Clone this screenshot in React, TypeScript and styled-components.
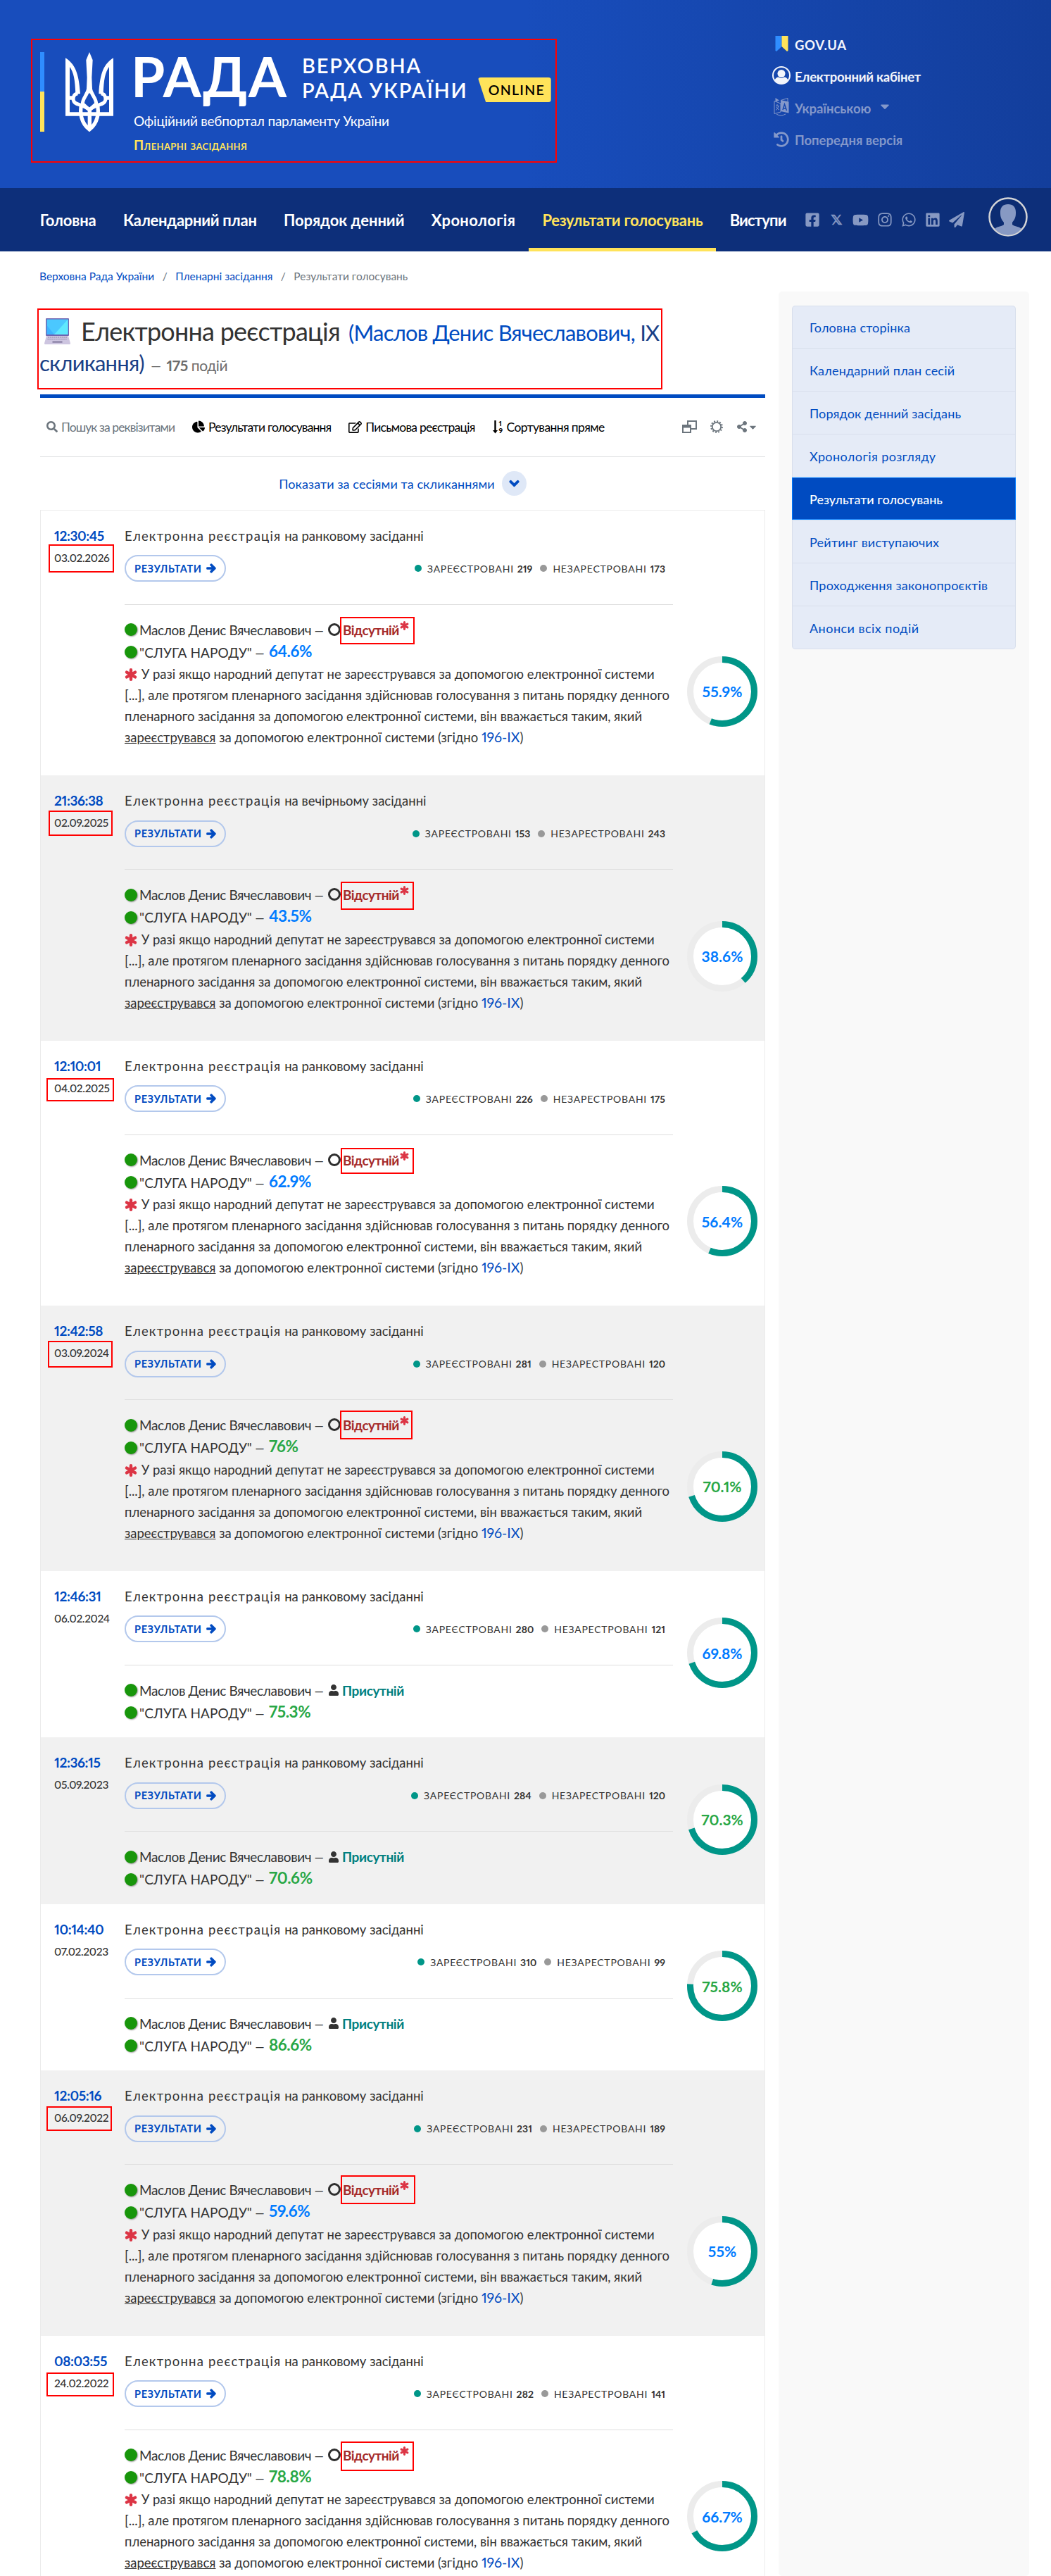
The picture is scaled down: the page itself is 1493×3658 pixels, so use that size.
import styled, { createGlobalStyle } from 'styled-components';
import {
	FaArrowRight,
	FaCaretDown,
	FaChartPie,
	FaChevronDown,
	FaFacebookSquare,
	FaHistory,
	FaInstagram,
	FaLinkedin,
	FaPaperPlane,
	FaRegEdit,
	FaSearch,
	FaShareAlt,
	FaUser,
	FaWhatsapp,
	FaYoutube,
} from 'react-icons/fa';

type Box = [left: number, top: number, width: number, height: number];

type Session = {
	time: string;
	date: string;
	place: string;
	registered: number;
	unregistered: number;
	faction: number;
	total: number;
	dateBox?: Box;
	absentBox?: Box;
};

const NAV = [
	{ label: 'Головна', ls: -0.18 },
	{ label: 'Календарний план', ls: -0.28 },
	{ label: 'Порядок денний', ls: -0.05 },
	{ label: 'Хронологія', ls: 0.3 },
	{ label: 'Результати голосувань', ls: -0.28, active: true },
	{ label: 'Виступи', ls: -0.83 },
];

const MENU = [
	{ label: 'Головна сторінка', ls: 0.19 },
	{ label: 'Календарний план сесій', ls: 0.18 },
	{ label: 'Порядок денний засідань', ls: 0.14 },
	{ label: 'Хронологія розгляду', ls: 0.4 },
	{ label: 'Результати голосувань', ls: 0.01, active: true },
	{ label: 'Рейтинг виступаючих', ls: 0.23 },
	{ label: 'Проходження законопроєктів', ls: 0.24 },
	{ label: 'Анонси всіх подій', ls: 0.48 },
];

const MORNING = 'на ранковому засіданні';
const EVENING = 'на вечірньому засіданні';

const SESSIONS: Session[] = [
	{ time: '12:30:45', date: '03.02.2026', place: MORNING, registered: 219, unregistered: 173, faction: 64.6, total: 55.9, dateBox: [69, 48, 93, 40], absentBox: [483, 151, 106, 39] },
	{ time: '21:36:38', date: '02.09.2025', place: EVENING, registered: 153, unregistered: 243, faction: 43.5, total: 38.6, dateBox: [69, 50, 91, 36], absentBox: [484, 151, 104, 40] },
	{ time: '12:10:01', date: '04.02.2025', place: MORNING, registered: 226, unregistered: 175, faction: 62.9, total: 56.4, dateBox: [66, 53, 96, 33], absentBox: [484, 152, 104, 37] },
	{ time: '12:42:58', date: '03.09.2024', place: MORNING, registered: 281, unregistered: 120, faction: 76, total: 70.1, dateBox: [68, 50, 92, 38], absentBox: [483, 149, 103, 41] },
	{ time: '12:46:31', date: '06.02.2024', place: MORNING, registered: 280, unregistered: 121, faction: 75.3, total: 69.8 },
	{ time: '12:36:15', date: '05.09.2023', place: MORNING, registered: 284, unregistered: 120, faction: 70.6, total: 70.3 },
	{ time: '10:14:40', date: '07.02.2023', place: MORNING, registered: 310, unregistered: 99, faction: 86.6, total: 75.8 },
	{ time: '12:05:16', date: '06.09.2022', place: MORNING, registered: 231, unregistered: 189, faction: 59.6, total: 55, dateBox: [66, 51, 93, 35], absentBox: [484, 149, 106, 41] },
	{ time: '08:03:55', date: '24.02.2022', place: MORNING, registered: 282, unregistered: 141, faction: 78.8, total: 66.7, dateBox: [66, 52, 96, 34], absentBox: [484, 150, 104, 42] },
];

const percentColor = (value: number) => (value >= 70 ? '#28a745' : '#007bff');

const Trident = () => (
	<svg width="68" height="113" viewBox="39 42 204 339" fill="none" stroke="#fff">
		<path d="M141 42L155 76L151 150L153 200L141 220L129 200L131 150L127 76Z" fill="#fff" stroke="none" />
		<path d="M39 67C78 92 96 128 102 219L82 222C80 160 74 128 57 105V298H225V105C208 128 202 160 200 222L181 219C186 128 204 92 243 67V314H39Z" fill="#fff" stroke="none" />
		<path d="M57 237H70M212 237H225" strokeWidth="16" />
		<path d="M92 219C72 218 66 246 80 258C92 268 118 266 141 288C164 266 190 268 202 258C216 246 210 218 190 219" strokeWidth="15" />
		<path d="M139 190C133 228 112 236 112 262L141 288L170 262C170 236 149 228 143 190" strokeWidth="15" />
		<path d="M108 262C98 300 106 345 141 372C176 345 184 300 174 262M142 288V370" strokeWidth="16" />
	</svg>
);

const Laptop = () => (
	<svg width="37" height="37" viewBox="0 0 37 37">
		<rect x="2" y="0" width="33" height="25" rx="1" fill="#6f63b0" />
		<rect x="3.5" y="1.5" width="30" height="21.5" fill="#4bc8ff" />
		<path d="M14 23L33.500 1.500V23Z" fill="#5fe9ff" />
		<path d="M3.500 23V10L14 23Z" fill="#3fb3ff" />
		<path d="M3 25H34L37 35.500Q37 37 35.500 37H1.500Q0 37 0 35.500Z" fill="#cdc5e0" />
		<path d="M5 27H32M4.500 29.500H32.500" stroke="#8f85a8" strokeDasharray="2 0.8" />
		<rect x="11.500" y="32" width="14" height="3" fill="#9a91b3" />
	</svg>
);

const GovFlag = () => (
	<svg width="19" height="22" viewBox="0 0 19 22">
		<path d="M0.500 0H9.500V15L2 22L0.500 21Z" fill="#2f8dff" />
		<path d="M9.500 0H18.500V21L17 22L9.500 15Z" fill="#ffe35a" />
	</svg>
);

const Cabinet = () => (
	<svg width="26" height="26" viewBox="0 0 26 26">
		<circle cx="13" cy="13" r="12" fill="none" stroke="#f3f5fb" strokeWidth="2" />
		<circle cx="13" cy="10.500" r="5.500" fill="#f3f5fb" />
		<path d="M3.500 20Q5 15.500 9 15.500Q13 18.500 17 15.500Q21 15.500 22.500 20Q19 24.500 13 24.500Q7 24.500 3.500 20Z" fill="#f3f5fb" />
	</svg>
);

const Language = () => (
	<svg width="22" height="26" viewBox="0 0 22 26" fill="none" stroke="#8498ca">
		<path d="M1 4.500L10 8V20L1 22.500Z" />
		<path d="M10 3L21.500 5.500V21.500L10 19Z" fill="#8498ca" stroke="none" />
		<path d="M2.500 0L8 3.500L2.500 5.500Z" fill="#8498ca" stroke="none" />
		<path d="M10 3.500L20 0.500V5M5 9V11M3 11.500H8M7 11.500Q6 16 3 17.500M4 13Q5.500 16 8 17M4 23Q10 27 17 23" />
		<path d="M13 17L15.500 9L18.500 18M14 14.500L17.500 15.300" stroke="#1647ae" strokeWidth="1.500" />
	</svg>
);

const SunIcon = () => (
	<svg width="18" height="18" viewBox="0 0 18 18" fill="none" stroke="#6c757d">
		<circle cx="9" cy="9" r="6.200" strokeWidth="1.800" />
		<circle cx="9" cy="9" r="7.900" strokeWidth="2" strokeDasharray="2 2.136" />
	</svg>
);

const RestoreIcon = () => (
	<svg width="21" height="18" viewBox="0 0 21 18" fill="none" stroke="#6c757d" strokeWidth="2">
		<path d="M8 6V1H20V12H13" />
		<path d="M1 7H12V17H1Z" />
		<path d="M1 8.500H12" strokeWidth="4" />
	</svg>
);

const SortArrow = () => (
	<svg width="7" height="19" viewBox="0 0 7 19">
		<path d="M2.300 0H4.700V14H7L3.500 18.500L0 14H2.300Z" />
	</svg>
);

const Asterisk = ({ size }: { size: number }) => (
	<svg width={size} height={size} viewBox="0 0 18 18" stroke="#dc3545" strokeWidth="4.4" strokeLinecap="round">
		<path d="M9 2.300V15.700M3 5.600L15 12.400M15 5.600L3 12.400" />
	</svg>
);

const Avatar = () => (
	<svg width="56" height="56" viewBox="0 0 56 56">
		<circle cx="28" cy="28" r="26.500" fill="#0c2c72" stroke="#d3d4d6" strokeWidth="2.500" />
		<path d="M28 10C35 10 39.500 14 39 23C39 30 36 33 34 36V39C38 42 43 41 47 45A25 25 0 0 1 9 45C13 41 18 42 22 39V36C20 33 17 30 17 23C16.500 14 21 10 28 10Z" fill="#8799c3" />
	</svg>
);

const SessionRow = ({ session }: { session: Session }) => {
	const { dateBox, absentBox } = session;
	const length = 2 * Math.PI * 45.5;
	return (
		<Row>
			{dateBox && <RedBox $box={dateBox} />}
			{absentBox && <RedBox $box={absentBox} />}
			<When>
				<Time>{session.time}</Time>
				<DateText>{session.date}</DateText>
			</When>
			<Details>
				<SessionTitle>
					<Spaced>Електронна реєстрація</Spaced> {session.place}
				</SessionTitle>
				<Summary>
					<ResultsButton>
						Результати <FaArrowRight size={14} stroke="currentColor" strokeWidth={50} />
					</ResultsButton>
					<Counts>
						<Dot $color="#009688" />
						Зареєстровані <b>{session.registered}</b>
						<Dot $color="#999" />
						Незарестровані <b>{session.unregistered}</b>
					</Counts>
				</Summary>
				<Line>
					<GreenDot />
					<Deputy>
						Маслов Денис Вячеславович <Dash>–</Dash>
					</Deputy>
					{absentBox ? (
						<>
							<Ring />
							<Absent>Відсутній</Absent>
							<Raised>
								<Asterisk size={13} />
							</Raised>
						</>
					) : (
						<>
							<FaUser size={16} />
							<Present>Присутній</Present>
						</>
					)}
				</Line>
				<Line>
					<GreenDot />
					<Faction>
						"СЛУГА НАРОДУ" <Dash>–</Dash>
					</Faction>
					<Percent $color={percentColor(session.faction)}>{session.faction}%</Percent>
				</Line>
				{absentBox && (
					<Note>
						<Asterisk size={18} /> У разі якщо народний депутат не зареєструвався за допомогою електронної системи
						<br />
						[...], але протягом пленарного засідання здійснював голосування з питань порядку денного
						<br />
						пленарного засідання за допомогою електронної системи, він вважається таким, який
						<br />
						<u>зареєструвався</u> за допомогою електронної системи (згідно <a>196-IX</a>)
					</Note>
				)}
			</Details>
			<Chart>
				<svg width="100" height="100" viewBox="0 0 100 100">
					<circle cx="50" cy="50" r="45.5" fill="#fff" stroke="#ececec" strokeWidth="9" />
					<circle
						cx="50"
						cy="50"
						r="45.5"
						fill="none"
						stroke="#009688"
						strokeWidth="9"
						strokeDasharray={`${(length * session.total) / 100} ${length}`}
						transform="rotate(-90 50 50)"
					/>
				</svg>
				<ChartLabel $color={percentColor(session.total)}>{session.total}%</ChartLabel>
			</Chart>
		</Row>
	);
};

const App = () => (
	<Page>
		<GlobalStyle />
		<Header>
			<Logo>
				<FlagBar />
				<Trident />
				<LogoText>
					<Wordmark>
						<Rada>РАДА</Rada>
						<Verkhovna>
							<div>ВЕРХОВНА</div>
							<WordLine>
								РАДА УКРАЇНИ <Online>ONLINE</Online>
							</WordLine>
						</Verkhovna>
					</Wordmark>
					<Tagline>Офіційний вебпортал парламенту України</Tagline>
					<Section>Пленарні засідання</Section>
				</LogoText>
			</Logo>
			<QuickLinks>
				<QuickLink $ls={0.64}>
					<IconSlot>
						<GovFlag />
					</IconSlot>
					GOV.UA
				</QuickLink>
				<QuickLink $ls={-0.28}>
					<IconSlot>
						<Cabinet />
					</IconSlot>
					Електронний кабінет
				</QuickLink>
				<QuickLink $ls={-0.05} $muted>
					<IconSlot>
						<Language />
					</IconSlot>
					Українською
					<LangCaret size={20} />
				</QuickLink>
				<QuickLink $ls={-0.03} $muted>
					<IconSlot>
						<FaHistory size={22} />
					</IconSlot>
					Попередня версія
				</QuickLink>
			</QuickLinks>
		</Header>
		<Nav>
			{NAV.map((item) => (
				<NavItem key={item.label} $ls={item.ls} $active={item.active}>
					{item.label}
				</NavItem>
			))}
			<Socials>
				<FaFacebookSquare size={22} />
				<XMark>𝕏</XMark>
				<FaYoutube size={23} />
				<FaInstagram size={22} />
				<FaWhatsapp size={22} />
				<FaLinkedin size={22} />
				<FaPaperPlane size={22} />
			</Socials>
			<AvatarSlot>
				<Avatar />
			</AvatarSlot>
		</Nav>
		<Breadcrumb>
			<a>Верховна Рада України</a>
			<span>/</span>
			<a>Пленарні засідання</a>
			<span>/</span>
			Результати голосувань
		</Breadcrumb>
		<Columns>
			<Main>
				<TitleBox>
					<TitleLine>
						<Laptop />
						<Title>Електронна реєстрація</Title>
						<TitleLink>
							(Маслов Денис Вячеславович, <em>IX</em>
						</TitleLink>
					</TitleLine>
					<TitleLine>
						<TitleLink>
							<em>скликання)</em>
						</TitleLink>
						<Total>
							<Dash>–</Dash>
							<b>175</b> подій
						</Total>
					</TitleLine>
				</TitleBox>
				<Toolbar>
					<Tool $muted $ls={-0.91}>
						<FaSearch size={16} />
						Пошук за реквізитами
					</Tool>
					<Tool $ls={-0.85}>
						<FaChartPie size={18} />
						Результати голосування
					</Tool>
					<Tool $ls={-0.78}>
						<FaRegEdit size={19} />
						Письмова реєстрація
					</Tool>
					<Tool $ls={-0.62}>
						<SortIcon>
							<SortArrow />
							<span>
								<div>1</div>
								<div>9</div>
							</span>
						</SortIcon>
						Сортування пряме
					</Tool>
					<ToolIcons>
						<RestoreIcon />
						<SunIcon />
						<Share>
							<FaShareAlt size={16} />
							<FaCaretDown size={15} />
						</Share>
					</ToolIcons>
				</Toolbar>
				<Toggle>
					Показати за сесіями та скликаннями
					<ToggleCircle>
						<FaChevronDown size={15} stroke="currentColor" strokeWidth={50} />
					</ToggleCircle>
				</Toggle>
				<List>
					{SESSIONS.map((session) => (
						<SessionRow key={session.date} session={session} />
					))}
				</List>
			</Main>
			<Aside>
				<Menu>
					{MENU.map((item) => (
						<MenuItem key={item.label} $ls={item.ls} $active={item.active}>
							{item.label}
						</MenuItem>
					))}
				</Menu>
			</Aside>
		</Columns>
	</Page>
);

export default App;

const GlobalStyle = createGlobalStyle`
	* {
		box-sizing: border-box;
	}
	body {
		margin: 0;
		background: #fff;
		color: #333;
		font-family: Lato, 'Noto Sans', sans-serif;
		font-variant-numeric: proportional-nums;
	}
	svg {
		flex-shrink: 0;
	}
`;

const Page = styled.div`
	display: flex;
	flex-direction: column;
	width: 1493px;
	height: 3658px;
	overflow: hidden;
`;

const Header = styled.header`
	display: flex;
	align-items: flex-start;
	flex-shrink: 0;
	height: 267px;
	padding-left: 44px;
	background: linear-gradient(90deg, #184dbc 50%, #133e9c 100%);
	color: #fff;
`;

const Logo = styled.div`
	display: flex;
	width: 747px;
	height: 176px;
	margin-top: 55px;
	padding: 17px 0 0 11px;
	border: 2px solid #f00;
`;

const FlagBar = styled.div`
	width: 6px;
	height: 113px;
	margin-right: 30px;
	background: linear-gradient(#2f8dff 50%, #ffe35a 50%);
`;

const LogoText = styled.div`
	margin-left: 29px;
`;

const Wordmark = styled.div`
	display: flex;
	height: 70px;
`;

const Rada = styled.div`
	width: 241px;
	font-size: 78px;
	font-weight: 700;
	line-height: 68px;
	letter-spacing: 1.3px;
	margin-left: -4px;
	margin-right: 2px;
`;

const Verkhovna = styled.div`
	font-size: 29px;
	font-weight: 600;
	line-height: 35px;
	letter-spacing: 1.8px;
	margin-top: 1px;
	white-space: nowrap;
`;

const WordLine = styled.div`
	display: flex;
`;

const Online = styled.div`
	width: 104px;
	height: 35px;
	margin-left: 14px;
	padding-left: 15px;
	border-radius: 4px;
	background: #ffe35a;
	clip-path: polygon(0 0, 100% 0, 100% 100%, 11% 100%);
	color: #000;
	font-size: 19.5px;
	font-weight: 600;
	letter-spacing: 1.3px;
`;

const Tagline = styled.div`
	margin-top: 12px;
	font-size: 19px;
	line-height: 31px;
	letter-spacing: -0.22px;
`;

const Section = styled.div`
	margin-top: 8px;
	color: #ffe35a;
	font-size: 19px;
	font-weight: 700;
	font-variant-caps: small-caps;
	line-height: 22px;
	letter-spacing: 0.4px;
`;

const QuickLinks = styled.div`
	margin: 41px 0 0 306px;
`;

const QuickLink = styled.div<{ $ls: number; $muted?: boolean }>`
	display: flex;
	align-items: center;
	height: 45.2px;
	color: ${({ $muted }) => ($muted ? '#8498ca' : '#f3f5fb')};
	font-size: 18.5px;
	font-weight: 700;
	letter-spacing: ${({ $ls }) => $ls}px;
`;

const IconSlot = styled.span`
	display: flex;
	justify-content: center;
	width: 26px;
	margin-right: 6px;
	padding-bottom: 3px;
`;

const LangCaret = styled(FaCaretDown)`
	margin: 0 0 6px 10px;
`;

const Nav = styled.nav`
	display: flex;
	flex-shrink: 0;
	height: 90px;
	padding-left: 37.5px;
	background: #0d2f7a;
`;

const NavItem = styled.div<{ $ls: number; $active?: boolean }>`
	padding: 0 19.2px;
	color: ${({ $active }) => ($active ? '#ffe35a' : '#fff')};
	box-shadow: ${({ $active }) => ($active ? 'inset 0 -5px #ffe35a' : 'none')};
	font-size: 22px;
	font-weight: 700;
	line-height: 91px;
	letter-spacing: ${({ $ls }) => $ls}px;
	white-space: nowrap;
`;

const Socials = styled.div`
	display: grid;
	grid-template-columns: repeat(7, 34.2px);
	align-items: center;
	justify-items: center;
	margin-left: 1px;
	color: #8799c3;
`;

const XMark = styled.span`
	font: 700 20px 'DejaVu Sans', sans-serif;
	line-height: 86px;
	-webkit-text-stroke: 0.6px #8799c3;
`;

const AvatarSlot = styled.div`
	margin: 13px 0 0 28px;
`;

const Breadcrumb = styled.div`
	display: flex;
	flex-shrink: 0;
	height: 57px;
	padding: 23px 0 0 56px;
	color: #6c757d;
	font-size: 15.5px;
	line-height: 24px;
	a {
		color: #004bc1;
	}
	span {
		width: 30px;
		text-align: center;
	}
`;

const Columns = styled.div`
	display: flex;
	gap: 19px;
	flex: 1;
	min-height: 0;
	padding-left: 57px;
`;

const Main = styled.main`
	width: 1030px;
`;

const TitleBox = styled.div`
	width: 888px;
	height: 115px;
	margin: 24px 0 7px -4px;
	padding: 7.5px 0 0 1px;
	border: 2px solid #f00;
	white-space: nowrap;
`;

const TitleLine = styled.div`
	display: flex;
	align-items: baseline;
	height: 45px;
	line-height: 45px;
	svg {
		align-self: flex-start;
		margin: 4px 15px 0 7px;
	}
`;

const Title = styled.span`
	width: 380px;
	font-size: 36px;
	letter-spacing: -0.75px;
`;

const TitleLink = styled.span`
	color: #004bc1;
	font-size: 31px;
	letter-spacing: -0.78px;
	em {
		color: #1a3f86;
		font-style: normal;
	}
`;

/* the dash is stretched to the width it has in the site's own typeface */
const Dash = styled.span`
	display: inline-block;
	transform: scaleX(1.45);
	transform-origin: right;
`;

const Total = styled.span`
	margin-left: 13px;
	color: #6c6c6c;
	font-size: 21px;
	letter-spacing: -0.4px;
	b {
		margin-left: 7px;
	}
`;

const Toolbar = styled.div`
	display: flex;
	align-items: center;
	gap: 25px;
	height: 89px;
	padding: 0 10px 1px 9px;
	border-top: 5px solid #004bc1;
	border-bottom: 1px solid #e3e4e6;
`;

const Tool = styled.div<{ $ls: number; $muted?: boolean }>`
	display: flex;
	align-items: center;
	gap: 5px;
	color: ${({ $muted }) => ($muted ? '#6c757d' : '#000')};
	font-size: 17.5px;
	letter-spacing: ${({ $ls }) => $ls}px;
	white-space: nowrap;
`;

const SortIcon = styled.span`
	display: flex;
	align-items: center;
	gap: 2px;
	width: 15px;
	font-size: 10px;
	font-weight: 900;
	line-height: 10px;
	letter-spacing: 0;
`;

const ToolIcons = styled.div`
	display: flex;
	align-items: center;
	gap: 19px;
	margin-left: auto;
	color: #6c757d;
`;

const Share = styled.div`
	display: flex;
	align-items: center;
`;

const Toggle = styled.div`
	display: flex;
	align-items: center;
	justify-content: center;
	gap: 10px;
	height: 75px;
	color: #004bc1;
	font-size: 18px;
	letter-spacing: 0.1px;
`;

const ToggleCircle = styled.span`
	display: grid;
	place-items: center;
	width: 35px;
	height: 35px;
	border-radius: 50%;
	background: #dfe8f7;
`;

const List = styled.div`
	border: 1px solid #ebebeb;
	border-bottom: 0;
`;

const Row = styled.article`
	position: relative;
	display: flex;
	padding: 20.7px 10px 19.3px 19px;
	&:nth-child(even) {
		background: #f1f1f1;
	}
`;

/* box coordinates are measured from the page edge, the row starts at 58px */
const RedBox = styled.div<{ $box: Box }>`
	position: absolute;
	left: ${({ $box }) => $box[0] - 58}px;
	top: ${({ $box }) => $box[1]}px;
	width: ${({ $box }) => $box[2]}px;
	height: ${({ $box }) => $box[3]}px;
	border: 2px solid #f00;
`;

const When = styled.div`
	width: 100px;
	line-height: 30px;
`;

const Time = styled.div`
	color: #004bc1;
	font-size: 19px;
	font-weight: 700;
	letter-spacing: -0.4px;
`;

const DateText = styled.div`
	margin-top: 1px;
	font-size: 15.5px;
	font-weight: 500;
	letter-spacing: -0.35px;
`;

const Details = styled.div`
	width: 779px;
	white-space: nowrap;
`;

const SessionTitle = styled.div`
	font-size: 18.5px;
	line-height: 30px;
`;

const Spaced = styled.span`
	letter-spacing: 1.2px;
`;

const Summary = styled.div`
	display: flex;
	align-items: center;
	justify-content: space-between;
	height: 83px;
	margin-bottom: 19.5px;
	padding: 13px 11px 32px 0;
	border-bottom: 1px solid #dfdfdf;
`;

const ResultsButton = styled.button`
	display: flex;
	align-items: center;
	gap: 6px;
	width: 144px;
	height: 38px;
	padding: 0 0 0 12px;
	border: 2px solid #b3c8ec;
	border-radius: 19px;
	background: transparent;
	color: #004bc1;
	font: 700 14.5px Lato, 'Noto Sans', sans-serif;
	letter-spacing: 0.65px;
	text-transform: uppercase;
`;

const Counts = styled.div`
	display: flex;
	align-items: center;
	font-size: 14px;
	letter-spacing: 0.75px;
	text-transform: uppercase;
	b {
		margin: 0 11px 0 5px;
		letter-spacing: 0;
	}
	b:last-child {
		margin-right: 0;
	}
`;

const Dot = styled.i<{ $color: string }>`
	width: 10px;
	height: 10px;
	margin-right: 8px;
	border-radius: 50%;
	background: ${({ $color }) => $color};
`;

const Line = styled.div`
	display: flex;
	align-items: center;
	height: 32px;
	font-size: 19px;
`;

const GreenDot = styled.i`
	width: 18px;
	height: 18px;
	margin-right: 3px;
	border-radius: 50%;
	background: #18960b;
	box-shadow: 1px 1px 2px rgba(0, 0, 0, 0.4);
`;

const Deputy = styled.span`
	display: flex;
	justify-content: space-between;
	width: 268px;
	padding-right: 5px;
	letter-spacing: -0.35px;
`;

const Faction = styled.span`
	display: flex;
	justify-content: space-between;
	width: 184px;
	padding-right: 5px;
	letter-spacing: 0.1px;
`;

const Percent = styled.span<{ $color: string }>`
	margin-top: -3px;
	color: ${({ $color }) => $color};
	font-size: 22.5px;
	font-weight: 700;
	line-height: 30px;
	letter-spacing: -0.4px;
`;

const Ring = styled.i`
	width: 18px;
	height: 18px;
	margin-bottom: 1px;
	border: 3px solid #2e2e2e;
	border-radius: 50%;
`;

const Absent = styled.b`
	margin-left: 3px;
	color: #a52a2a;
	letter-spacing: -0.55px;
`;

const Raised = styled.span`
	display: flex;
	margin: 0 0 12px 1px;
`;

const Present = styled.b`
	margin-left: 4px;
	color: #008080;
	letter-spacing: -0.4px;
`;

const Note = styled.p`
	margin: 0 0 20px;
	font-size: 18.5px;
	line-height: 30px;
	letter-spacing: -0.02px;
	svg {
		margin-right: 1px;
		vertical-align: -3px;
	}
	a {
		color: #004bc1;
		font-size: 19.5px;
		line-height: 1;
	}
`;

const Chart = styled.div`
	display: grid;
	place-items: center;
	align-self: flex-end;
	width: 100px;
	height: 100px;
	margin: 0 0 50.7px 20px;
	> * {
		grid-area: 1 / 1;
	}
`;

const ChartLabel = styled.span<{ $color: string }>`
	color: ${({ $color }) => $color};
	font-size: 21px;
	font-weight: 700;
`;

const Aside = styled.aside`
	width: 356px;
	padding: 20px 19px;
	border-radius: 5px;
	background: #f9f9f9;
`;

const Menu = styled.div`
	border-radius: 5px;
	background: #e5ebf7;
	box-shadow: inset 0 0 0 1px #d8dfec;
`;

const MenuItem = styled.div<{ $ls: number; $active?: boolean }>`
	height: 61px;
	padding-left: 25px;
	border-bottom: 1px solid #d8dfec;
	background: ${({ $active }) => ($active ? '#004bc1' : 'none')};
	box-shadow: ${({ $active }) => ($active ? 'inset 0 0 0 1px #007bff' : 'none')};
	color: ${({ $active }) => ($active ? '#fff' : '#004bc1')};
	font-size: 18px;
	font-weight: ${({ $active }) => ($active ? 500 : 400)};
	line-height: 62px;
	letter-spacing: ${({ $ls }) => $ls}px;
	&:last-child {
		border-bottom: 0;
	}
`;
